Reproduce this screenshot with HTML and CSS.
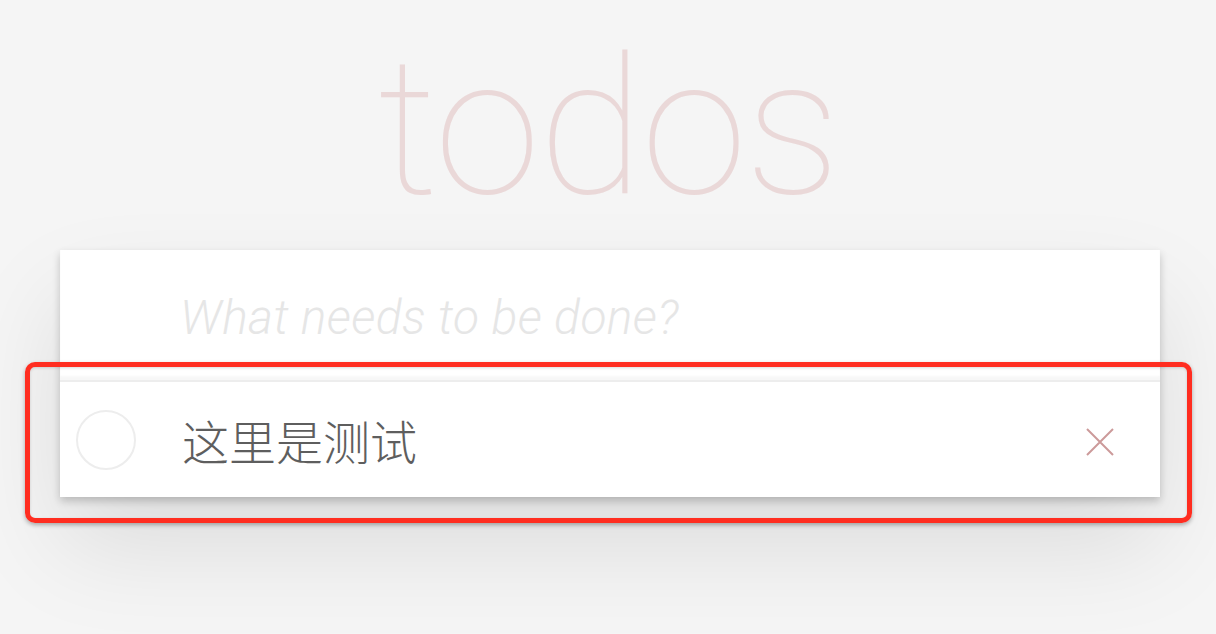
FILE: index.html
```html
<!DOCTYPE html>
<html lang="zh">
<head>
<meta charset="utf-8">
<title>todos</title>
<link rel="stylesheet" href="styles.css">
</head>
<body>
<div class="page">
  <section class="todoapp">
    <h1 class="title">todos</h1>
    <div class="card">
      <div class="new-todo"><span class="placeholder">What needs to be done?</span></div>
      <ul class="todo-list">
        <li class="todo-item">
          <span class="toggle"></span>
          <span class="label">这里是测试</span>
          <span class="destroy">
            <svg width="28" height="28" viewBox="0 0 28 28"><path d="M1 1 L27 27 M27 1 L1 27" stroke="#cc9a9a" stroke-width="2" fill="none"/></svg>
          </span>
        </li>
      </ul>
    </div>
  </section>
  <div class="annotation"></div>
</div>
</body>
</html>
```

FILE: styles.css
```css
html, body {
  margin: 0;
  padding: 0;
  background: #f5f5f5;
  font-family: "Helvetica Neue", "Liberation Sans", Roboto, "Noto Sans CJK SC", sans-serif;
}
.page {
  position: relative;
  width: 1216px;
  height: 634px;
  overflow: hidden;
}
.todoapp {
  width: 1100px;
  margin-left: 60px;
  padding-top: 32px;
}
.title {
  margin: 0;
  height: 218px;
  text-align: center;
  font-family: Roboto, "Liberation Sans", sans-serif;
  font-weight: 100;
  font-size: 192px;
  line-height: 192px;
  color: #ead8d8;
  letter-spacing: -2px;
  padding-right: 4px;
  box-sizing: border-box;
}
.card {
  background: #fff;
  box-shadow: 0 4px 8px rgba(0,0,0,0.2), 0 50px 100px rgba(0,0,0,0.1);
}
.new-todo {
  height: 130px;
  box-sizing: border-box;
  padding: 0 32px 0 120px;
  display: flex;
  align-items: center;
  box-shadow: inset 0 -4px 2px rgba(0,0,0,0.03);
}
.placeholder {
  font-family: "Helvetica Neue", Roboto, sans-serif;
  font-style: italic;
  font-weight: 300;
  font-size: 48px;
  letter-spacing: 0.4px;
  color: #e6e6e6;
  padding-top: 4px;
}
.todo-list {
  list-style: none;
  margin: 0;
  padding: 0;
  border-top: 2px solid #ededed;
}
.todo-item {
  height: 115px;
  display: flex;
  align-items: center;
}
.toggle {
  width: 56px;
  height: 56px;
  margin-left: 16px;
  border: 2px solid #ededed;
  border-radius: 50%;
  flex: none;
}
.label {
  margin-left: 46px;
  flex: 1;
  font-family: "Noto Sans CJK SC", sans-serif;
  font-weight: 300;
  font-size: 47px;
  color: #5e5e5e;
}
.destroy {
  width: 28px;
  height: 28px;
  margin-right: 46px;
  margin-top: 4px;
  display: flex;
}
.annotation {
  position: absolute;
  left: 25px;
  top: 362px;
  width: 1157px;
  height: 151px;
  border: 5px solid #ff2d20;
  border-radius: 10px;
  box-shadow: 0 2px 4px rgba(0,0,0,0.3), inset 0 1px 3px rgba(0,0,0,0.15);
}
```
